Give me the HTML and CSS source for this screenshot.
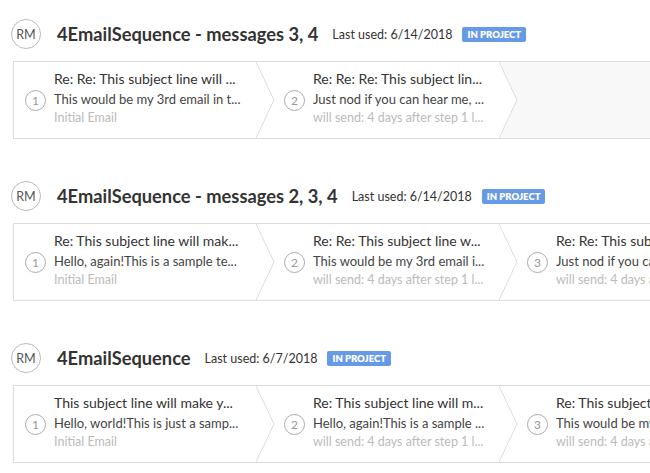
FILE: index.html
```html
<!DOCTYPE html>
<html>
<head>
<meta charset="utf-8">
<link rel="stylesheet" href="styles.css">
</head>
<body>
<div class="page">

  <section class="seq">
    <div class="seq-head">
      <div class="avatar">RM</div>
      <h2 class="title">4EmailSequence - messages 3, 4</h2>
      <span class="used">Last used: 6/14/2018</span>
      <span class="badge">IN PROJECT</span>
    </div>
    <div class="card">
      <div class="step">
        <div class="num">1</div>
        <div class="text">
          <div class="subject">Re: Re: This subject line will ...</div>
          <div class="preview">This would be my 3rd email in t...</div>
          <div class="meta">Initial Email</div>
        </div>
        <svg class="chev" viewBox="0 0 19 77" preserveAspectRatio="none"><polygon points="0,0 18,38.5 0,77" fill="#fff"/><polyline points="0,0 18,38.5 0,77" fill="none" stroke="#dcdcdc" stroke-width="1" vector-effect="non-scaling-stroke"/></svg>
      </div>
      <div class="step">
        <div class="num">2</div>
        <div class="text">
          <div class="subject">Re: Re: Re: This subject lin...</div>
          <div class="preview">Just nod if you can hear me, ...</div>
          <div class="meta">will send: 4 days after step 1 l...</div>
        </div>
        <svg class="chev" viewBox="0 0 19 77" preserveAspectRatio="none"><polygon points="0,0 18,38.5 0,77" fill="#fff"/><polyline points="0,0 18,38.5 0,77" fill="none" stroke="#dcdcdc" stroke-width="1" vector-effect="non-scaling-stroke"/></svg>
      </div>
    </div>
  </section>

  <section class="seq">
    <div class="seq-head">
      <div class="avatar">RM</div>
      <h2 class="title">4EmailSequence - messages 2, 3, 4</h2>
      <span class="used">Last used: 6/14/2018</span>
      <span class="badge">IN PROJECT</span>
    </div>
    <div class="card">
      <div class="step">
        <div class="num">1</div>
        <div class="text">
          <div class="subject">Re: This subject line will mak...</div>
          <div class="preview">Hello, again!This is a sample te...</div>
          <div class="meta">Initial Email</div>
        </div>
        <svg class="chev" viewBox="0 0 19 77" preserveAspectRatio="none"><polygon points="0,0 18,38.5 0,77" fill="#fff"/><polyline points="0,0 18,38.5 0,77" fill="none" stroke="#dcdcdc" stroke-width="1" vector-effect="non-scaling-stroke"/></svg>
      </div>
      <div class="step">
        <div class="num">2</div>
        <div class="text">
          <div class="subject">Re: Re: This subject line w...</div>
          <div class="preview">This would be my 3rd email i...</div>
          <div class="meta">will send: 4 days after step 1 l...</div>
        </div>
        <svg class="chev" viewBox="0 0 19 77" preserveAspectRatio="none"><polygon points="0,0 18,38.5 0,77" fill="#fff"/><polyline points="0,0 18,38.5 0,77" fill="none" stroke="#dcdcdc" stroke-width="1" vector-effect="non-scaling-stroke"/></svg>
      </div>
      <div class="step">
        <div class="num">3</div>
        <div class="text">
          <div class="subject">Re: Re: This subject lin...</div>
          <div class="preview">Just nod if you can hear me, ...</div>
          <div class="meta">will send: 4 days after step 2 l...</div>
        </div>
      </div>
    </div>
  </section>

  <section class="seq">
    <div class="seq-head">
      <div class="avatar">RM</div>
      <h2 class="title">4EmailSequence</h2>
      <span class="used">Last used: 6/7/2018</span>
      <span class="badge">IN PROJECT</span>
    </div>
    <div class="card">
      <div class="step">
        <div class="num">1</div>
        <div class="text">
          <div class="subject">This subject line will make y...</div>
          <div class="preview">Hello, world!This is just a samp...</div>
          <div class="meta">Initial Email</div>
        </div>
        <svg class="chev" viewBox="0 0 19 77" preserveAspectRatio="none"><polygon points="0,0 18,38.5 0,77" fill="#fff"/><polyline points="0,0 18,38.5 0,77" fill="none" stroke="#dcdcdc" stroke-width="1" vector-effect="non-scaling-stroke"/></svg>
      </div>
      <div class="step">
        <div class="num">2</div>
        <div class="text">
          <div class="subject">Re: This subject line will m...</div>
          <div class="preview">Hello, again!This is a sample ...</div>
          <div class="meta">will send: 4 days after step 1 l...</div>
        </div>
        <svg class="chev" viewBox="0 0 19 77" preserveAspectRatio="none"><polygon points="0,0 18,38.5 0,77" fill="#fff"/><polyline points="0,0 18,38.5 0,77" fill="none" stroke="#dcdcdc" stroke-width="1" vector-effect="non-scaling-stroke"/></svg>
      </div>
      <div class="step">
        <div class="num">3</div>
        <div class="text">
          <div class="subject">Re: This subject line will...</div>
          <div class="preview">This would be my 3rd email i...</div>
          <div class="meta">will send: 4 days after step 1 l...</div>
        </div>
      </div>
    </div>
  </section>

</div>
</body>
</html>
```

FILE: styles.css
```css
html, body {
  margin: 0;
  padding: 0;
  background: #fff;
}

body {
  font-family: Lato, "Open Sans", "Liberation Sans", sans-serif;
  color: #333;
  overflow: hidden;
}

.page {
  padding-top: 19px;
  overflow: hidden;
  width: 650px;
}

.seq {
  margin-bottom: 42px;
}

.seq:last-child {
  margin-bottom: 0;
}

.seq-head {
  display: flex;
  align-items: center;
  height: 30px;
  padding-left: 11px;
}

.avatar {
  width: 28px;
  height: 28px;
  border: 1px solid #bbb;
  border-radius: 50%;
  display: flex;
  align-items: center;
  justify-content: center;
  font-size: 12.5px;
  color: #555;
  flex-shrink: 0;
}

.title {
  margin: 0 0 0 16px;
  font-size: 18.3px;
  font-weight: 700;
  color: #333;
  white-space: nowrap;
}

.used {
  margin-left: 14px;
  font-size: 12.5px;
  color: #333;
  white-space: nowrap;
}

.badge {
  margin-left: 10px;
  background: #6699e6;
  color: #fff;
  font-size: 9.5px;
  font-weight: 800;
  height: 15px;
  line-height: 15px;
  padding: 0 5px;
  border-radius: 2px;
  white-space: nowrap;
}

.card {
  margin: 12px 0 0 13px;
  width: 760px;
  height: 76px;
  border: 1px solid #dcdcdc;
  border-right: none;
  background: #f8f8f8;
  display: flex;
}

.step {
  position: relative;
  flex: 0 0 auto;
  width: 243px;
  background: #fff;
  display: flex;
  align-items: center;
  padding-left: 28px;
  box-sizing: border-box;
}

.step:first-child {
  width: 242px;
  padding-left: 11px;
}

.chev {
  position: absolute;
  z-index: 1;
  left: 100%;
  top: 0;
  width: 19px;
  height: 100%;
}

.num {
  width: 19px;
  height: 19px;
  border: 1px solid #aaa;
  border-radius: 50%;
  display: flex;
  align-items: center;
  justify-content: center;
  font-size: 12px;
  color: #999;
  flex-shrink: 0;
}

.text {
  margin-left: 8px;
  width: 188px;
  margin-top: -4px;
}

.text div {
  white-space: nowrap;
  overflow: hidden;
}

.subject {
  font-size: 14px;
  line-height: 20px;
  color: #333;
}

.preview {
  font-size: 13px;
  line-height: 20px;
  color: #444;
}

.meta {
  font-size: 12.5px;
  line-height: 18px;
  color: #bbb;
}
```
